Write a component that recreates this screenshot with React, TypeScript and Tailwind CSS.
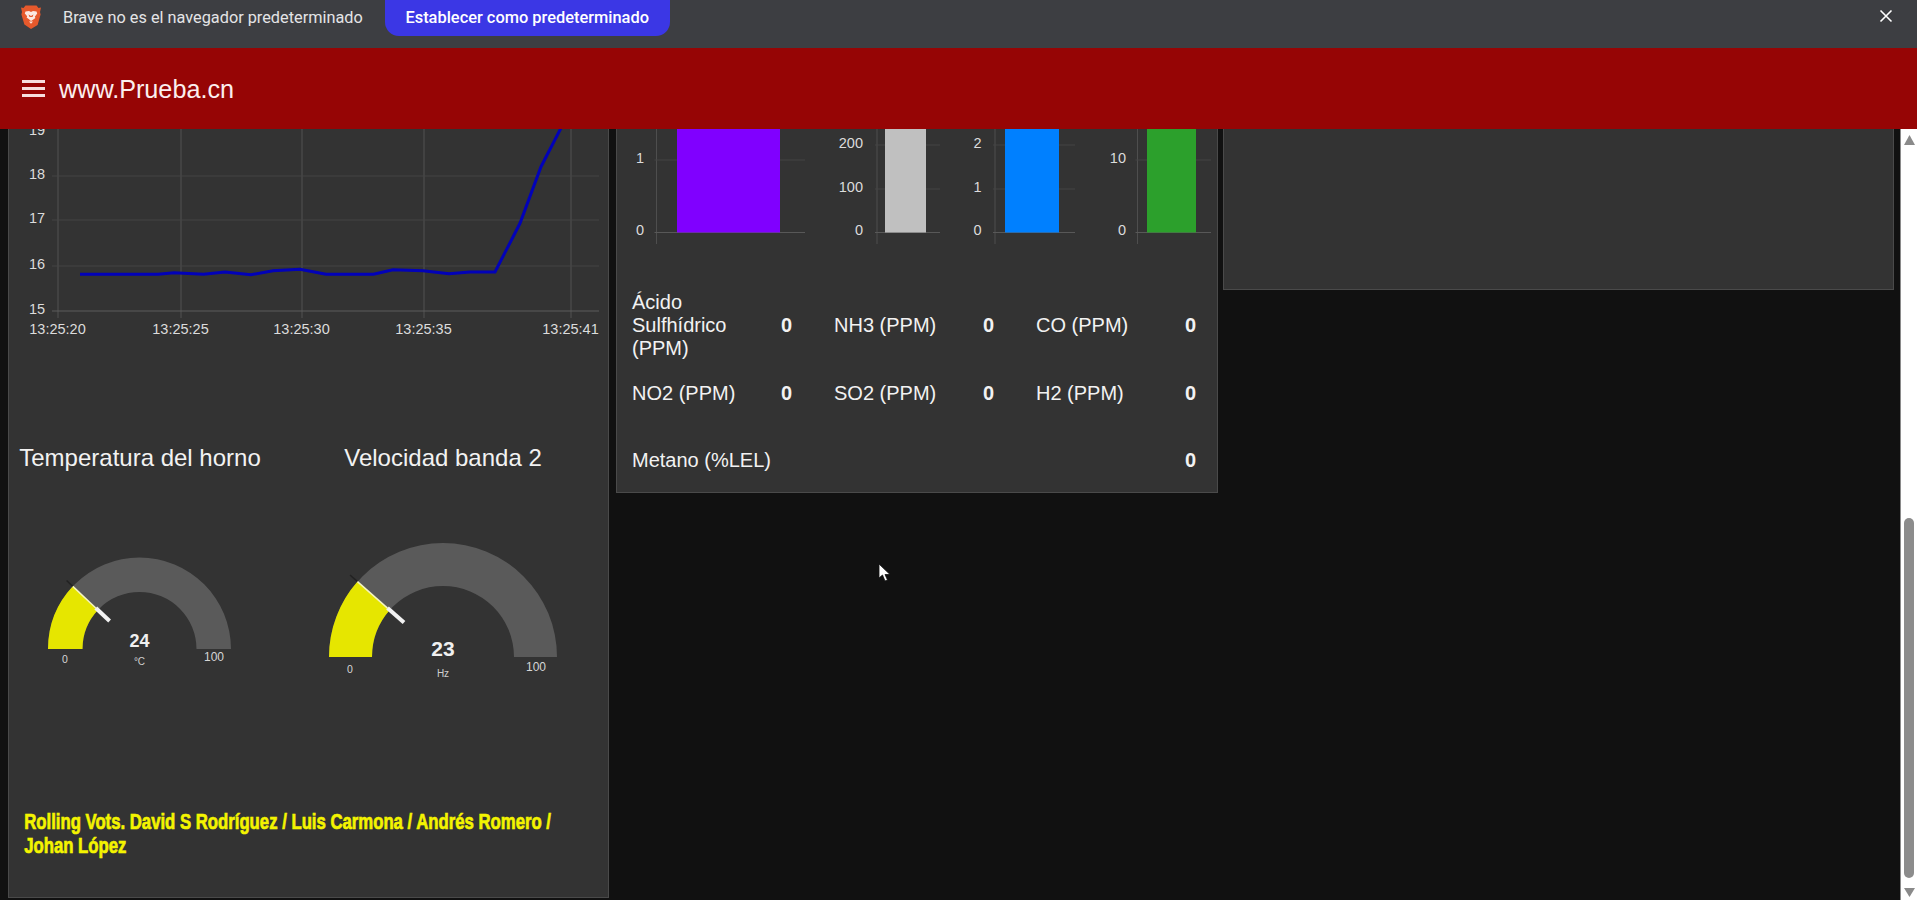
import React from "react";

const linePts = "80,274.3 158,274.3 174,272.7 203.5,274.3 225,272 251,274.7 273,270.7 300,269.3 326,274.3 373.5,274.3 393,269.7 423,270.7 449,273.7 470,272 495,272 520,223.3 541,166.7 561,128";

function pt(cx: number, cy: number, r: number, deg: number) {
  const a = (deg * Math.PI) / 180;
  return [cx - r * Math.cos(a), cy - r * Math.sin(a)];
}
function arc(cx: number, cy: number, R: number, r: number, a0: number, a1: number) {
  const [x0, y0] = pt(cx, cy, R, a0);
  const [x1, y1] = pt(cx, cy, R, a1);
  const [x2, y2] = pt(cx, cy, r, a1);
  const [x3, y3] = pt(cx, cy, r, a0);
  return `M${x0} ${y0}A${R} ${R} 0 0 1 ${x1} ${y1}L${x2} ${y2}A${r} ${r} 0 0 0 ${x3} ${y3}Z`;
}

type GaugeProps = {
  box: string; w: number; cx: number; cy: number; R: number; r: number; angle: number;
  needleOut: number; needleIn: number; value: string; unit: string; vy: number; vSize: number; uy: number;
  zeroX: number; zeroY: number; maxX: number; maxY: number;
};

function Gauge(g: GaugeProps) {
  const [ox, oy] = pt(g.cx, g.cy, g.needleOut, g.angle);
  const [rx, ry] = pt(g.cx, g.cy, g.R, g.angle);
  const [ix, iy] = pt(g.cx, g.cy, g.r + 3, g.angle);
  const [ex, ey] = pt(g.cx, g.cy, g.needleIn, g.angle);
  return (
    <svg width={g.w} height={208} viewBox={g.box} className="block">
      <path d={arc(g.cx, g.cy, g.R, g.r, 0, 180)} fill="#5a5a5a" />
      <path d={arc(g.cx, g.cy, g.R, g.r, 0, g.angle)} fill="#e6e600" />
      <line x1={ox} y1={oy} x2={rx} y2={ry} stroke="#222" strokeWidth="1.5" />
      <line x1={rx} y1={ry} x2={ix} y2={iy} stroke="#f4f4c0" strokeWidth="1.5" />
      <line x1={ix} y1={iy} x2={ex} y2={ey} stroke="#f2f2f2" strokeWidth="4" />
      <text x={g.cx} y={g.vy} textAnchor="middle" dominantBaseline="central" fontSize={g.vSize} fontWeight="700" fill="#f0f0f0">{g.value}</text>
      <text x={g.cx} y={g.uy} textAnchor="middle" dominantBaseline="central" fontSize="10" fill="#cfcfcf">{g.unit}</text>
      <text x={g.zeroX} y={g.zeroY} textAnchor="middle" dominantBaseline="central" fontSize="10.500" fill="#d6d6d6">0</text>
      <text x={g.maxX} y={g.maxY} textAnchor="middle" dominantBaseline="central" fontSize="12" fill="#d6d6d6">100</text>
    </svg>
  );
}

function LineChart() {
  const ys: [string, number][] = [["18", 176], ["17", 220], ["16", 266], ["15", 311]];
  const xs: [string, number][] = [["13:25:20", 58], ["13:25:25", 181], ["13:25:30", 302], ["13:25:35", 424], ["13:25:41", 571]];
  return (
    <svg width={599} height={214} viewBox="9 129 599 214" className="block">
      {xs.map(([t, x]) => (
        <line key={t} x1={x} y1={129} x2={x} y2={318} stroke="#525252" />
      ))}
      {ys.map(([t, y]) => (
        <line key={t} x1={52} y1={y} x2={599} y2={y} stroke={t === "15" ? "#5c5c5c" : "#454545"} />
      ))}
      <polyline points={linePts} fill="none" stroke="#0202b8" strokeWidth="3" />
      <text x={37} y={130} textAnchor="middle" dominantBaseline="central" fontSize="14.500" fill="#dcdcdc">19</text>
      {ys.map(([t, y]) => (
        <text key={t} x={37} y={y - 2} textAnchor="middle" dominantBaseline="central" fontSize="14.500" fill="#dcdcdc">{t}</text>
      ))}
      {xs.map(([t, x]) => (
        <text key={t} x={x - 0.5} y={329} textAnchor="middle" dominantBaseline="central" fontSize="14.500" fill="#dcdcdc">{t}</text>
      ))}
    </svg>
  );
}

function BarChart({ axis, end, bar, color, labels, labelX, anchor }: {
  axis: number; end: number; bar: [number, number]; color: string; labels: [string, number][]; labelX: number; anchor: "middle" | "end";
}) {
  return (
    <g>
      <line x1={axis} y1={129} x2={axis} y2={244} stroke="#4e4e4e" />
      <line x1={axis - 2} y1={232.5} x2={end} y2={232.5} stroke="#585858" />
      {labels.filter(([t]) => t !== "0").map(([t, y]) => (
        <line key={t} x1={axis - 2} y1={y + 1} x2={end} y2={y + 1} stroke="#444444" />
      ))}
      <rect x={bar[0]} y={129} width={bar[1] - bar[0]} height={103.5} fill={color} />
      {labels.map(([t, y]) => (
        <text key={t} x={labelX} y={y - 1} textAnchor={anchor} dominantBaseline="central" fontSize="14.500" fill="#dcdcdc">{t}</text>
      ))}
    </g>
  );
}

function Reading({ label, multi }: { label: string; multi?: boolean }) {
  return (
    <div className="flex items-center justify-between">
      <span className={multi ? "w-[100px] leading-[23px]" : "leading-[23px]"}>{label}</span>
      <span className="font-bold leading-[23px]">0</span>
    </div>
  );
}

export default function App() {
  return (
    <div className="flex h-[900px] w-[1917px] flex-col overflow-hidden bg-[#111111] font-['Liberation_Sans',Arial,sans-serif] text-white">
      {/* browser notice */}
      <div className="flex h-12 shrink-0 items-start bg-[#3d3e42] font-['Roboto',sans-serif]">
        <svg width="22" height="26" viewBox="0 0 22 26" className="ml-[20px] mt-[4px] shrink-0">
          <path d="M5.5 1.5h11l2 2.5 2.5-.6-1 4.6.6 2.4-3 10.6L11 25 4.4 20.5 1.4 10.4 2 8 1 3.4l2.5.6z" fill="#e6592c" />
          <path d="M5.5 7.5 9 7l2 1 2-1 3.5.5.7 2-2.4 3.2.6 1.4-2.4 1.7L11 17l-2-1.7-2.4-1.7.6-1.4L4.8 9.5z" fill="#fbe9e2" />
          <path d="M8.5 10.5l2.5 1.5 2.5-1.5-1 2.5H9.500z" fill="#e6592c" />
          <path d="M9 17.500h4l-2 2.300z" fill="#fbe9e2" />
        </svg>
        <span className="ml-[21px] mt-[8px] whitespace-nowrap text-[16.300px] leading-[20px] text-[#e4e4e6]">Brave no es el navegador predeterminado</span>
        <div className="ml-[22px] flex h-9 w-[285px] items-center justify-center rounded-b-[14px] bg-[#3b37e5] text-[16.400px] font-medium text-white">
          Establecer como predeterminado
        </div>
        <svg width="14" height="14" viewBox="0 0 14 14" className="ml-auto mr-[24px] mt-[9px]">
          <path d="M1.500 1.500l11 11M12.500 1.500l-11 11" stroke="#fff" strokeWidth="1.600" />
        </svg>
      </div>

      {/* app header */}
      <div className="flex h-[81px] shrink-0 items-center bg-[#960505]">
        <div className="ml-[22px] flex w-[23px] flex-col gap-[4px]">
          <div className="h-[3px] bg-[#f7dede]" />
          <div className="h-[3px] bg-[#f7dede]" />
          <div className="h-[3px] bg-[#f7dede]" />
        </div>
        <span className="ml-[14px] mt-[2px] text-[25.200px] leading-none text-[#fbeeee]">www.Prueba.cn</span>
      </div>

      {/* body */}
      <div className="relative flex min-h-0 flex-1">
        <div className="flex min-w-0 flex-1 items-start pl-2">
          {/* left panel */}
          <div className="h-[769px] w-[601px] shrink-0 border border-t-0 border-[#4a4a4a] bg-[#333333]">
            <LineChart />
            <div className="mt-[101px] flex">
              <div className="w-[262px]">
                <div className="text-center text-[24px] leading-[28px] text-[#f2f2f2]">Temperatura del horno</div>
                <Gauge box="9 472 262 208" w={262} cx={139.5} cy={649} R={91.5} r={57} angle={43.2} needleOut={100} needleIn={41} value="24" unit="°C" vy={641} vSize={18} uy={661} zeroX={65} zeroY={659} maxX={214} maxY={657} />
              </div>
              <div className="ml-[52px] w-[240px]">
                <div className="text-center text-[24px] leading-[28px] text-[#f2f2f2]">Velocidad banda 2</div>
                <Gauge box="323 472 240 208" w={240} cx={443} cy={657} R={114} r={71} angle={41.4} needleOut={124} needleIn={52} value="23" unit="Hz" vy={648} vSize={21} uy={673} zeroX={350} zeroY={669} maxX={536} maxY={667} />
              </div>
            </div>
            <div className="mt-[130px] origin-left scale-x-[0.76] whitespace-nowrap pl-[20px] text-[22px] font-bold leading-[24px] text-[#f4f400] [-webkit-text-stroke:0.7px_#f4f400]">
              <div>Rolling Vots. David S Rodríguez / Luis Carmona / Andrés Romero /</div>
              <div>Johan López</div>
            </div>
          </div>

          {/* middle panel */}
          <div className="ml-[7px] h-[364px] w-[602px] shrink-0 border border-t-0 border-[#4a4a4a] bg-[#333333]">
            <svg width={600} height={162} viewBox="617 129 600 162" className="block">
              <BarChart axis={656.5} end={805} bar={[677, 780]} color="#8000ff" labels={[["1", 159], ["0", 231]]} labelX={640} anchor="middle" />
              <BarChart axis={877} end={940} bar={[885, 926]} color="#c0c0c0" labels={[["200", 144], ["100", 188], ["0", 231]]} labelX={863} anchor="end" />
              <BarChart axis={995} end={1075} bar={[1005, 1059]} color="#0080ff" labels={[["2", 144], ["1", 188], ["0", 231]]} labelX={977.5} anchor="middle" />
              <BarChart axis={1137.5} end={1211} bar={[1147, 1196]} color="#2ca02c" labels={[["10", 159], ["0", 231]]} labelX={1126} anchor="end" />
            </svg>
            <div className="ml-[15px] grid w-[564px] grid-cols-[160px_160px_160px] gap-x-[42px] text-[20px] text-[#f2f2f2]">
              <Reading label="Ácido Sulfhídrico (PPM)" multi />
              <Reading label="NH3 (PPM)" />
              <Reading label="CO (PPM)" />
              <div className="col-span-3 mt-[22px] grid grid-cols-[160px_160px_160px] gap-x-[42px]">
                <Reading label="NO2 (PPM)" />
                <Reading label="SO2 (PPM)" />
                <Reading label="H2 (PPM)" />
              </div>
              <div className="col-span-3 mt-[44px]">
                <Reading label="Metano (%LEL)" />
              </div>
            </div>
          </div>

          {/* right panel */}
          <div className="ml-[5px] h-[161px] w-[671px] shrink-0 border border-t-0 border-[#4a4a4a] bg-[#333333]" />
        </div>

        {/* scrollbar */}
        <div className="flex w-[17px] shrink-0 flex-col items-center border-l border-[#8a8a8a] bg-white pt-[6px]">
          <svg width="11" height="10" viewBox="0 0 11 10"><path d="M5.500 0 11 10H0z" fill="#8a8a8a" /></svg>
          <div className="mt-[373px] h-[360px] w-[10px] rounded-[5px] bg-[#8c8c8c]" />
          <svg width="11" height="9" viewBox="0 0 11 9" className="mt-[10px]"><path d="M0 0h11L5.500 9z" fill="#8a8a8a" /></svg>
        </div>

        {/* mouse cursor */}
        <svg width="13" height="19" viewBox="0 0 13 19" className="absolute left-[878px] top-[434px]">
          <path d="M1 1v14l3.500-3 2.500 6 2.500-1-2.500-5.500H12z" fill="#fff" stroke="#111" strokeWidth="0.800" />
        </svg>
      </div>
    </div>
  );
}
